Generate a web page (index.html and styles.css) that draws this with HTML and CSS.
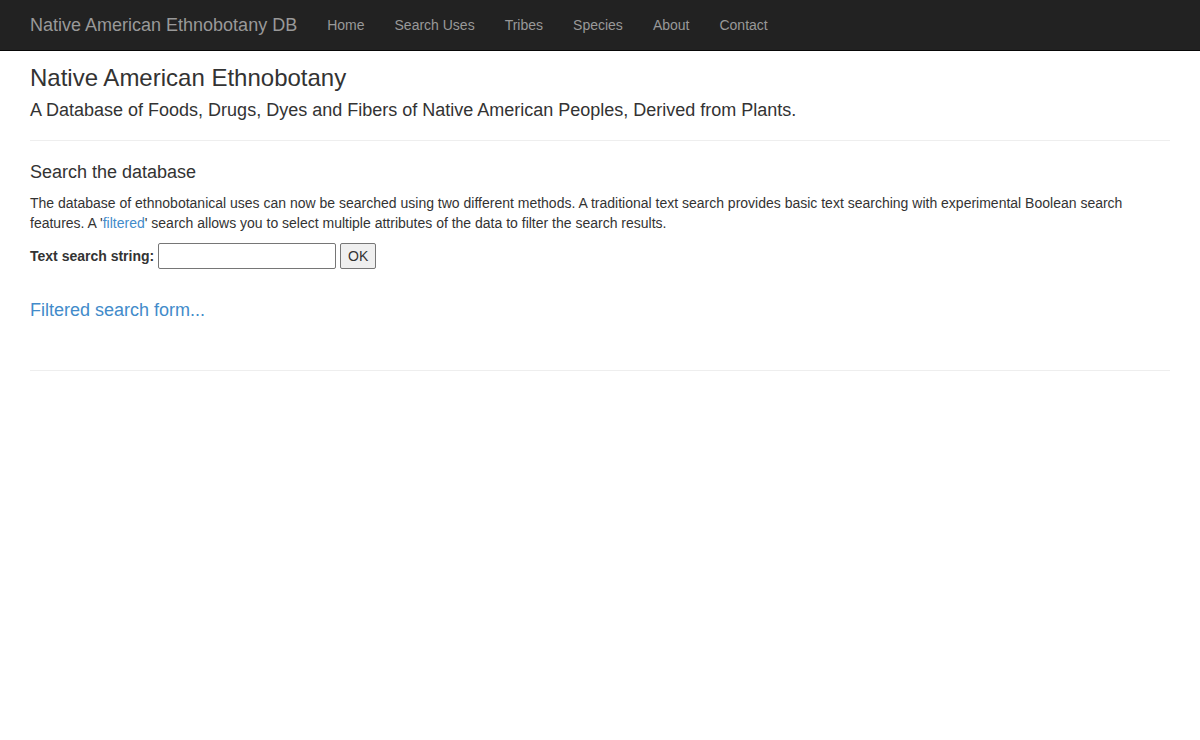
FILE: index.html
```html
<!DOCTYPE html>
<html lang="en">
<head>
<meta charset="utf-8">
<title>Native American Ethnobotany DB</title>
<link rel="stylesheet" href="styles.css">
</head>
<body>
<nav class="navbar">
  <div class="container nav-inner">
    <a class="brand" href="#">Native American Ethnobotany DB</a>
    <ul class="nav-links">
      <li><a href="#">Home</a></li>
      <li><a href="#">Search Uses</a></li>
      <li><a href="#">Tribes</a></li>
      <li><a href="#">Species</a></li>
      <li><a href="#">About</a></li>
      <li><a href="#">Contact</a></li>
    </ul>
  </div>
</nav>
<main class="container">
  <div class="page-header">
    <h3 class="title">Native American Ethnobotany</h3>
    <h4 class="subtitle">A Database of Foods, Drugs, Dyes and Fibers of Native American Peoples, Derived from Plants.</h4>
  </div>
  <h4 class="section-title">Search the database</h4>
  <p class="intro">The database of ethnobotanical uses can now be searched using two different methods. A traditional text search provides basic text searching with experimental Boolean search features. A '<a href="#">filtered</a>' search allows you to select multiple attributes of the data to filter the search results.</p>
  <form class="search-form">
    <label class="search-label" for="q">Text search string:</label>
    <input class="search-input" id="q" type="text">
    <button class="search-btn" type="button">OK</button>
  </form>
  <h4 class="filtered"><a href="#">Filtered search form...</a></h4>
  <hr class="rule">
</main>
</body>
</html>
```
FILE: styles.css
```css
* { box-sizing: border-box; }
html, body { margin: 0; padding: 0; }
body {
  font-family: "Liberation Sans", Arial, Helvetica, sans-serif;
  font-size: 14px;
  line-height: 20px;
  color: #333;
  background: #fff;
}
a { color: #428bca; text-decoration: none; }
.container {
  width: 1170px;
  margin: 0 auto;
  padding: 0 15px;
}
.navbar {
  background: #222;
  border-bottom: 1px solid #080808;
  height: 51px;
}
.nav-inner {
  display: flex;
  align-items: flex-start;
}
.brand {
  display: block;
  margin-left: -15px;
  padding: 15px;
  font-size: 18px;
  line-height: 20px;
  color: #999;
}
.nav-links {
  display: flex;
  list-style: none;
  margin: 0;
  padding: 0;
}
.nav-links a {
  display: block;
  padding: 15px;
  line-height: 20px;
  color: #999;
}
h3, h4 { font-weight: 500; line-height: 1.1; }
.page-header {
  margin: 14px 0 22px;
  padding-bottom: 9px;
  border-bottom: 1px solid #eee;
}
.title {
  font-size: 24px;
  margin: 0 0 10px;
}
.subtitle {
  font-size: 18px;
  margin: 10px 0 10px;
}
.section-title {
  font-size: 18px;
  margin: 22px 0 10px;
}
.intro {
  margin: 0 0 10px;
}
.search-form {
  display: flex;
  align-items: center;
  gap: 4px;
  margin: 0 0 32px;
}
.search-label {
  font-weight: bold;
}
.search-input {
  width: 178px;
  height: 26px;
  font: inherit;
  border: 1px solid #767676;
  border-radius: 2px;
  padding: 1px 2px;
}
.search-btn {
  height: 26px;
  width: 36px;
  font: inherit;
  padding: 1px 6px;
  border: 1px solid #767676;
  border-radius: 2px;
  background: #efefef;
  color: #333;
}
.filtered {
  font-size: 18px;
  margin: 0 0 10px;
}
.rule {
  margin: 49px 0 20px;
  border: 0;
  border-top: 1px solid #eee;
}
```
